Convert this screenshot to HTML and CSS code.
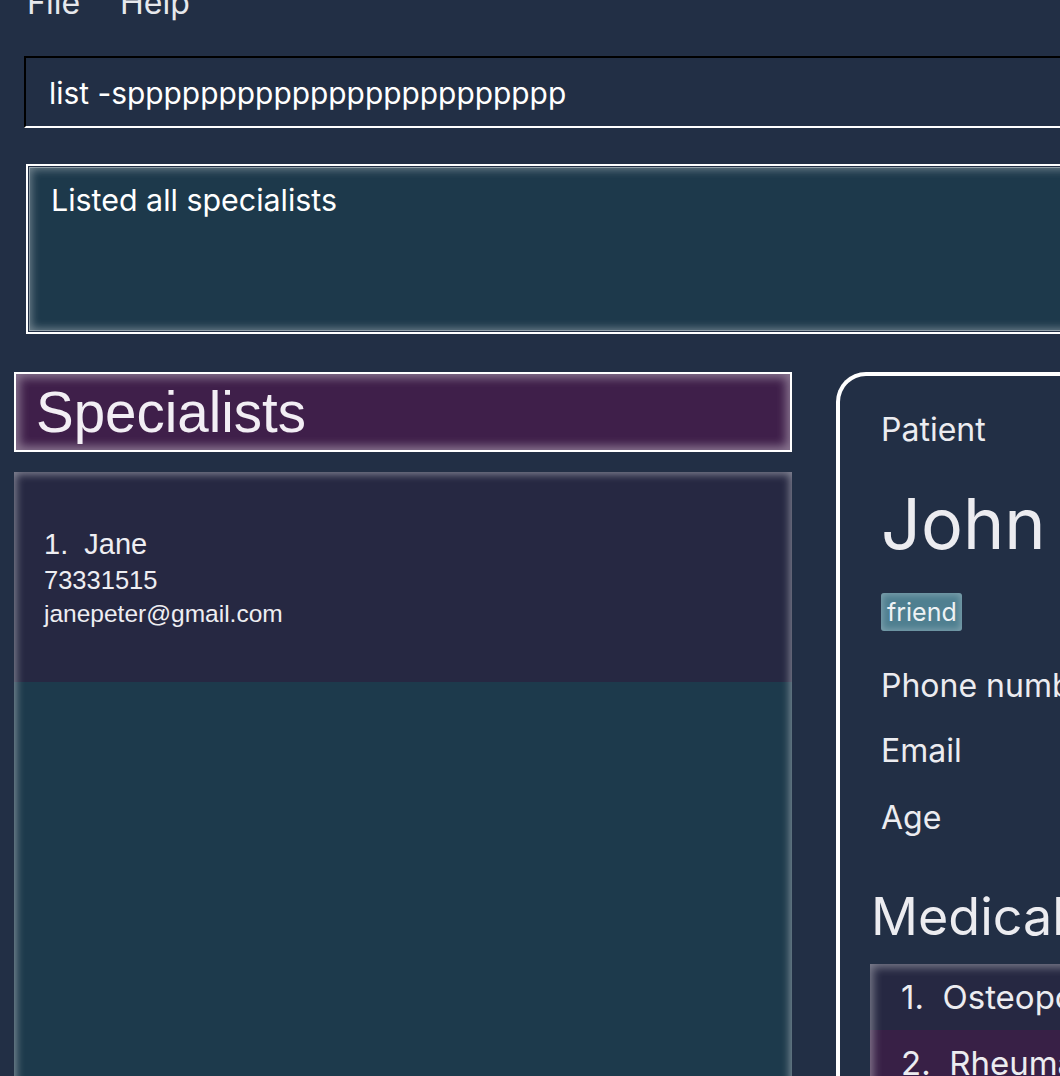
FILE: index.html
```html
<!DOCTYPE html>
<html>
<head>
<meta charset="utf-8">
<link rel="stylesheet" href="styles.css">
</head>
<body>
<div class="app">
  <nav class="menubar"><span>File</span><span>Help</span></nav>
  <div class="command">list -spppppppppppppppppppppppp</div>
  <div class="result"><div class="result-inner">Listed all specialists</div></div>
  <div class="main">
    <section class="left">
      <div class="header"><h1>Specialists</h1></div>
      <div class="list">
        <div class="cell">
          <div class="name">1.&nbsp; Jane</div>
          <div class="sub phone-no">73331515</div>
          <div class="sub">janepeter@gmail.com</div>
        </div>
      </div>
    </section>
    <section class="details">
      <div class="info">
        <div class="label">Patient</div>
        <div class="person">John</div>
        <div class="tags"><span class="tag">friend</span></div>
        <div class="label phone">Phone number</div>
        <div class="label email">Email</div>
        <div class="label age">Age</div>
      </div>
      <div class="medical">
        <h2>Medical</h2>
        <div class="mlist">
          <div class="mitem">1.&nbsp; Osteoporosis</div>
          <div class="mitem alt">2.&nbsp; Rheumatoid arthritis</div>
        </div>
      </div>
    </section>
  </div>
</div>
</body>
</html>
```
FILE: styles.css
```css
html, body {
  margin: 0;
  padding: 0;
}
body {
  width: 1060px;
  height: 1076px;
  overflow: hidden;
  background: #222f45;
  color: #ececf0;
  font-family: Inter, "Noto Sans", sans-serif;
}
.app {
  width: 1060px;
  height: 1076px;
  overflow: hidden;
}
.menubar {
  display: flex;
  gap: 40px;
  padding-left: 27px;
  margin-top: -13px;
  height: 32px;
  font-size: 32px;
  line-height: 32px;
  color: #e6e8ec;
}
.command {
  margin-top: 37px;
  margin-left: 24px;
  width: 1100px;
  border-top: 2px solid #000;
  border-left: 2px solid #000;
  border-bottom: 2px solid #fff;
  padding: 20px 0 18px 23px;
  font-size: 29.9px;
  line-height: 30px;
  color: #fff;
  white-space: nowrap;
}
.result {
  margin-top: 36px;
  margin-left: 26px;
  width: 1100px;
  border: 2px solid #fff;
  padding: 1px;
  background: #222f45;
}
.result-inner {
  height: 164px;
  box-sizing: border-box;
  padding: 15px 0 0 22px;
  background: #1d394b;
  box-shadow: inset 0 0 0 1px rgba(255,255,255,0.35), inset 0 0 10px 2px rgba(255,255,255,0.4);
  font-size: 30.4px;
  line-height: 36px;
  color: #fff;
}
.main {
  display: flex;
  align-items: flex-start;
  margin-top: 38px;
}
.left {
  margin-left: 14px;
  width: 778px;
  flex: none;
}
.header {
  border: 2px solid #fff;
  height: 76px;
  background: #3f1f4a;
  box-shadow: inset 0 0 10px 4px rgba(255,255,255,0.38);
}
.header h1 {
  margin: 0;
  padding: 11px 0 0 20px;
  font-family: "Liberation Sans", Arial, sans-serif;
  font-weight: normal;
  font-size: 56.5px;
  line-height: 56px;
  color: #f2eef4;
}
.list {
  position: relative;
  margin-top: 20px;
  height: 620px;
  background: #1d3a4c;
}
.list::after {
  content: "";
  position: absolute;
  inset: 0;
  box-shadow: inset 0 0 8px 2px rgba(255,255,255,0.45);
  pointer-events: none;
}
.cell {
  height: 210px;
  box-sizing: border-box;
  padding: 58px 0 0 30px;
  background: #262842;
  font-family: "Liberation Sans", Arial, sans-serif;
  color: #eeeef2;
}
.cell .name {
  font-size: 29px;
  line-height: 29px;
}
.cell .sub {
  font-size: 24.5px;
  line-height: 24.5px;
  margin-top: 9px;
}
.cell .phone-no {
  font-size: 25.5px;
}
.details {
  flex: none;
  margin-left: 44px;
  width: 400px;
  height: 760px;
  border-top: 4px solid #fff;
  border-left: 4px solid #fff;
  border-top-left-radius: 30px;
}
.info {
  padding: 34px 0 0 41px;
}
.label {
  font-size: 32px;
  line-height: 40px;
  white-space: nowrap;
  color: #ececf0;
}
.person {
  margin-top: 34px;
  margin-bottom: -2px;
  font-size: 70px;
  line-height: 80px;
  color: #ececf0;
}
.tags {
  margin-top: 31px;
  height: 38px;
  display: flex;
}
.tag {
  display: block;
  height: 38px;
  line-height: 38px;
  padding: 0 5px 0 6px;
  font-size: 25px;
  border-radius: 3px;
  background: #4f7f90;
  box-shadow: inset 0 0 6px 2px rgba(255,255,255,0.25);
  color: #eef2f4;
}
.phone { margin-top: 35px; }
.email { margin-top: 25px; }
.age { margin-top: 27px; }
.medical {
  padding-left: 30px;
}
.medical h2 {
  margin: 49px 0 0 1px;
  font-weight: normal;
  font-size: 52px;
  line-height: 60px;
  color: #ececf0;
  white-space: nowrap;
}
.mlist {
  position: relative;
  margin-top: 17px;
  width: 400px;
}
.mlist::after {
  content: "";
  position: absolute;
  inset: 0;
  box-shadow: inset 0 0 10px 3px rgba(255,255,255,0.4);
  pointer-events: none;
}
.mitem {
  height: 66px;
  padding-left: 31px;
  font-size: 33px;
  line-height: 66px;
  white-space: nowrap;
  background: #262842;
}
.mitem.alt {
  background: #382046;
}
```
